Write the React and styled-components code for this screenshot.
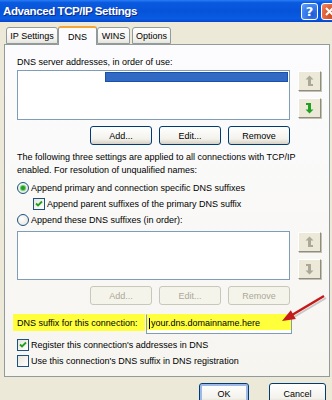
import React from "react";
import styled, { createGlobalStyle } from "styled-components";

const GlobalStyle = createGlobalStyle`
  html, body { margin: 0; padding: 0; background: #ECE9D8; }
  body { font-family: "Liberation Sans", Arial, sans-serif; font-size: 9px; color: #000; }
`;

const Window = styled.div`
  width: 332px;
  height: 400px;
  overflow: hidden;
  background: #ECE9D8;
  position: relative;
`;

const TitleBar = styled.div`
  height: 22px;
  display: flex;
  align-items: center;
  justify-content: space-between;
  padding-left: 3px;
  background: linear-gradient(#2A7CF4 0%, #0A5AE0 12%, #0553D8 50%, #0A5CE4 85%, #0645C8 100%);
`;

const Title = styled.div`
  color: #fff;
  font-family: "Liberation Sans", Arial, sans-serif;
  font-weight: bold;
  font-size: 11.5px;
  letter-spacing: -0.4px;
  text-shadow: 1px 1px 0 #0A2A8A;
`;

const Caption = styled.div`
  display: flex;
  gap: 3px;
  margin-right: -6px;
`;

const CapButton = styled.div`
  width: 17px;
  height: 17px;
  border: 1px solid #fff;
  border-radius: 3px;
  box-sizing: border-box;
  display: flex;
  align-items: center;
  justify-content: center;
  color: #fff;
  font-family: "DejaVu Sans", sans-serif;
  font-weight: bold;
  font-size: 13px;
  background: ${({ $close }) =>
    $close
      ? "radial-gradient(circle at 70% 70%, #CC4418, #E4663E 60%, #F28E6E)"
      : "radial-gradient(circle at 70% 70%, #1F5BD8, #3D82F0 60%, #6DA3F7)"};
`;

const Body = styled.div`
  padding: 4px 2px 0 4px;
`;

const Tabs = styled.div`
  display: flex;
  align-items: flex-end;
  height: 18px;
  padding-left: 2px;
`;

const Tab = styled.div`
  box-sizing: border-box;
  width: ${({ $w }) => $w}px;
  height: ${({ $active }) => ($active ? "19px" : "17px")};
  margin-bottom: ${({ $active }) => ($active ? "-1px" : "0")};
  display: flex;
  align-items: center;
  justify-content: center;
  border: 1px solid #919B9C;
  border-bottom: ${({ $active }) => ($active ? "none" : "1px solid #919B9C")};
  border-top: ${({ $active }) => ($active ? "2px solid #F2A637" : "1px solid #919B9C")};
  border-radius: 3px 3px 0 0;
  background: ${({ $active }) =>
    $active ? "#FCFCFE" : "linear-gradient(#FEFEFE, #F4F3EE 70%, #E6E4DA)"};
  margin-right: ${({ $gap }) => $gap || 0}px;
  position: relative;
  z-index: ${({ $active }) => ($active ? 2 : 1)};
`;

const Panel = styled.div`
  width: 326px;
  height: 333px;
  box-sizing: border-box;
  border: 1px solid #919B9C;
  background: linear-gradient(#FCFCFE, #F6F5F0);
  padding: 11px 8px 0 12px;
`;

const Text = styled.div`
  line-height: 13px;
  white-space: nowrap;
  margin-top: ${({ $mt }) => $mt || 0}px;
`;

const ListRow = styled.div`
  display: flex;
  gap: 8px;
  margin-top: ${({ $mt }) => $mt || 0}px;
`;

const ListBox = styled.div`
  width: 273px;
  height: ${({ $h }) => $h}px;
  box-sizing: border-box;
  border: 1px solid #7F9DB9;
  background: #fff;
  padding: 1px 1px 0 0;
  display: flex;
  flex-direction: column;
  align-items: flex-end;
`;

const Selected = styled.div`
  width: 183px;
  height: 10px;
  background: #316AC5;
  border: 1px solid #1C4FA8;
  box-sizing: border-box;
`;

const SideButtons = styled.div`
  display: flex;
  flex-direction: column;
  gap: 7px;
  padding-top: 1px;
`;

const ArrowButton = styled.div`
  width: 23px;
  height: 20px;
  box-sizing: border-box;
  border: 1px solid #fff;
  border-right-color: #8F8D80;
  border-bottom-color: #8F8D80;
  box-shadow: 1px 1px 0 #C4C1B2;
  background: #ECE9D8;
  display: flex;
  align-items: center;
  justify-content: center;
`;

const ButtonRow = styled.div`
  width: 273px;
  display: flex;
  justify-content: flex-end;
  gap: 7px;
  margin-top: 6px;
`;

const Button = styled.div`
  width: ${({ $w }) => $w || 62}px;
  height: ${({ $h }) => $h || 19}px;
  box-sizing: border-box;
  border: 1px solid ${({ $disabled }) => ($disabled ? "#C9C7BA" : "#003C74")};
  border-radius: 3px;
  background: ${({ $disabled }) =>
    $disabled ? "#F5F4EA" : "linear-gradient(#FFFFFF, #F3F2EC 70%, #D6D0C5)"};
  color: ${({ $disabled }) => ($disabled ? "#ACA899" : "#000")};
  box-shadow: ${({ $focus }) => ($focus ? "inset 0 0 0 2px #9DB9EB" : "none")};
  display: flex;
  align-items: center;
  justify-content: center;
`;

const OptionRow = styled.div`
  height: 16px;
  display: flex;
  align-items: center;
  gap: 2px;
  margin-left: ${({ $ml }) => $ml || 0}px;
  margin-top: ${({ $mt }) => $mt || 0}px;
  white-space: nowrap;
`;

const Radio = styled.span`
  width: 12px;
  height: 12px;
  box-sizing: border-box;
  border-radius: 50%;
  border: 1px solid #1C5180;
  background: radial-gradient(circle at 40% 40%, #fff, #E2E0D8);
  display: inline-flex;
  align-items: center;
  justify-content: center;
  &::after {
    content: "";
    width: 4px;
    height: 4px;
    border-radius: 50%;
    background: ${({ $on }) => ($on ? "#21A121" : "transparent")};
    box-shadow: ${({ $on }) => ($on ? "0 0 1px 1px #5CC45C" : "none")};
  }
`;

const Check = styled.span`
  width: 12px;
  height: 12px;
  box-sizing: border-box;
  border: 1px solid #1C5180;
  background: linear-gradient(135deg, #E8E6DC, #fff);
  display: inline-flex;
  align-items: center;
  justify-content: center;
`;

const SuffixRow = styled.div`
  display: flex;
  margin-top: 9px;
  margin-left: -4px;
  height: 20px;
`;

const SuffixLabel = styled.div`
  width: 128px;
  height: 17px;
  padding-left: 4px;
  background: #FFFF3C;
  display: flex;
  align-items: center;
  white-space: nowrap;
`;

const SuffixInput = styled.div`
  width: 146px;
  height: 20px;
  box-sizing: border-box;
  border: 1px solid #7F9DB9;
  border-top-color: #FFFF3C;
  background: linear-gradient(#FFFF3C 82%, #fff 82%);
  display: flex;
  align-items: center;
  padding: 0 0 2px 2px;
  margin-left: 1px;
  white-space: nowrap;
`;

const Caret = styled.span`
  display: inline-block;
  width: 1px;
  height: 11px;
  background: #000;
  margin-right: 1px;
`;

const Arrow = styled.svg`
  position: absolute;
  left: 260px;
  top: 278px;
  pointer-events: none;
`;

const Footer = styled.div`
  display: flex;
  justify-content: flex-end;
  gap: 20px;
  padding-right: 4px;
  margin-top: 6px;
`;

function CheckMark() {
  return (
    <svg width="8" height="8" viewBox="0 0 8 8">
      <path d="M1 3.5 L3 5.5 L7 1.5" stroke="#21A121" strokeWidth="1.8" fill="none" />
    </svg>
  );
}

function MoveIcon({ up, color }) {
  return (
    <svg width="9" height="12" viewBox="0 0 9 12">
      {up ? (
        <path d="M4.5 0.5 L8.5 4.5 L6 4.5 L6 9 L8 9 L8 11 L3 11 L3 4.5 L0.5 4.5 Z" fill={color} />
      ) : (
        <path d="M4.5 11.5 L8.5 7.5 L6 7.5 L6 1 L1 1 L1 3 L3 3 L3 7.5 L0.5 7.5 Z" fill={color} />
      )}
    </svg>
  );
}

function CloseIcon() {
  return (
    <svg width="9" height="9" viewBox="0 0 9 9">
      <path d="M1 1 L8 8 M8 1 L1 8" stroke="#fff" strokeWidth="2" />
    </svg>
  );
}

export default function App() {
  return (
    <Window>
      <GlobalStyle />
      <TitleBar>
        <Title>Advanced TCP/IP Settings</Title>
        <Caption>
          <CapButton>?</CapButton>
          <CapButton $close><CloseIcon /></CapButton>
        </Caption>
      </TitleBar>
      <Body>
        <Tabs>
          <Tab $w={52}>IP Settings</Tab>
          <Tab $w={39} $active>DNS</Tab>
          <Tab $w={33} $gap={2}>WINS</Tab>
          <Tab $w={39}>Options</Tab>
        </Tabs>
        <Panel>
          <Text>DNS server addresses, in order of use:</Text>
          <ListRow $mt={1}>
            <ListBox $h={50}>
              <Selected />
            </ListBox>
            <SideButtons>
              <ArrowButton><MoveIcon up color="#ACA899" /></ArrowButton>
              <ArrowButton><MoveIcon color="#21A121" /></ArrowButton>
            </SideButtons>
          </ListRow>
          <ButtonRow>
            <Button>Add...</Button>
            <Button>Edit...</Button>
            <Button>Remove</Button>
          </ButtonRow>
          <Text $mt={6}>
            The following three settings are applied to all connections with TCP/IP
            <br />
            enabled. For resolution of unqualified names:
          </Text>
          <OptionRow $mt={3}>
            <Radio $on />
            Append primary and connection specific DNS suffixes
          </OptionRow>
          <OptionRow $ml={16}>
            <Check><CheckMark /></Check>
            Append parent suffixes of the primary DNS suffix
          </OptionRow>
          <OptionRow>
            <Radio />
            Append these DNS suffixes (in order):
          </OptionRow>
          <ListRow $mt={3}>
            <ListBox $h={49} />
            <SideButtons>
              <ArrowButton><MoveIcon up color="#ACA899" /></ArrowButton>
              <ArrowButton><MoveIcon color="#ACA899" /></ArrowButton>
            </SideButtons>
          </ListRow>
          <ButtonRow>
            <Button $disabled>Add...</Button>
            <Button $disabled>Edit...</Button>
            <Button $disabled>Remove</Button>
          </ButtonRow>
          <SuffixRow>
            <SuffixLabel>DNS suffix for this connection:</SuffixLabel>
            <SuffixInput>
              <Caret />your.dns.domainname.here
            </SuffixInput>
          </SuffixRow>
          <OptionRow $mt={3}>
            <Check><CheckMark /></Check>
            Register this connection's addresses in DNS
          </OptionRow>
          <OptionRow>
            <Check />
            Use this connection's DNS suffix in DNS registration
          </OptionRow>
        </Panel>
        <Footer>
          <Button $w={50} $h={22} $focus>OK</Button>
          <Button $w={57} $h={22}>Cancel</Button>
        </Footer>
      </Body>
      <Arrow width="72" height="50" viewBox="0 0 72 50">
        <line x1="66" y1="20" x2="34" y2="39" stroke="#9A9A9A" strokeWidth="2" opacity="0.5" />
        <line x1="64" y1="18" x2="32" y2="37" stroke="#C41A1A" strokeWidth="2.5" />
        <polygon points="22,43 30.8,32.2 35.8,41" fill="#C41A1A" />
      </Arrow>
    </Window>
  );
}
